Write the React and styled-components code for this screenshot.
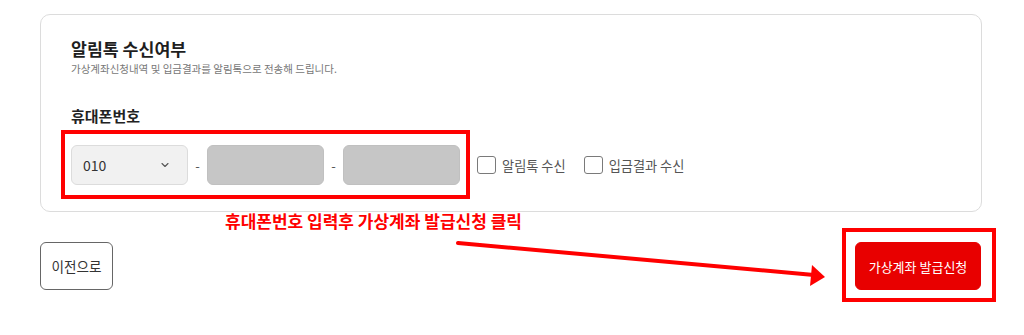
import React from "react";
import styled, { createGlobalStyle } from "styled-components";

const GlobalStyle = createGlobalStyle`
  html, body { margin: 0; padding: 0; background: #fff; }
  body { font-family: "Noto Sans CJK KR", "Noto Sans", sans-serif; color: #222; }
  * { box-sizing: border-box; }
`;

const Page = styled.div`
  min-height: 335px;
  padding: 14px 42px 32px 40px;
`;

const Card = styled.section`
  border: 1px solid #dcdcdc;
  border-radius: 10px;
  padding: 23px 30px 26px;
`;

const Title = styled.h2`
  margin: 0;
  font-size: 17.3px;
  line-height: 22px;
  font-weight: 700;
  color: #1e1e1e;
`;

const Sub = styled.p`
  margin: 2px 0 0;
  font-size: 10.5px;
  line-height: 14px;
  color: #777;
`;

const Label = styled.div`
  margin-top: 30px;
  font-size: 15px;
  line-height: 20px;
  font-weight: 700;
  color: #222;
`;

const Row = styled.div`
  margin-top: 19px;
  display: flex;
  align-items: center;
`;

const PhoneGroup = styled.div`
  position: relative;
  display: flex;
  align-items: center;
`;

const Highlight = styled.div`
  position: absolute;
  top: -15px;
  height: 69px;
  left: -10px;
  right: -10px;
  border: 4px solid #ff0000;
  pointer-events: none;
`;

const Select = styled.div`
  width: 117px;
  height: 40px;
  border: 1px solid #dcdcdc;
  border-radius: 6px;
  background: #f1f1f1;
  display: flex;
  align-items: center;
  justify-content: space-between;
  padding: 0 16px 0 11px;
  font-size: 14px;
  color: #333;
`;

const Dash = styled.span`
  width: 19px;
  text-align: center;
  font-size: 13px;
  color: #555;
`;

const Field = styled.div`
  width: 117px;
  height: 40px;
  border-radius: 6px;
  background: #c6c6c6;
  border: 1px solid #c0c0c0;
`;

const Checks = styled.div`
  display: flex;
  align-items: center;
  gap: 18px;
  margin-left: 17px;
`;

const CheckLabel = styled.label`
  display: flex;
  align-items: center;
  gap: 6px;
  font-size: 13.2px;
  color: #555;
`;

const Box = styled.span`
  width: 19px;
  height: 18px;
  border: 1px solid #7a7a7a;
  border-radius: 3px;
  background: #fff;
`;

const BottomBar = styled.div`
  position: relative;
  margin-top: 30px;
  height: 48px;
  display: flex;
  justify-content: space-between;
  align-items: flex-start;
`;

const Button = styled.button`
  display: block;
  height: 48px;
  padding: 0;
  width: ${(p) => (p.$primary ? 126 : 73)}px;
  border-radius: 6px;
  font-family: inherit;
  font-size: ${(p) => (p.$primary ? 13 : 13.6)}px;
  border: 1px solid ${(p) => (p.$primary ? "#e80000" : "#666")};
  background: ${(p) => (p.$primary ? "#e80000" : "#fff")};
  color: ${(p) => (p.$primary ? "#fff" : "#333")};
`;

const PrimaryWrap = styled.div`
  position: relative;
  height: 48px;
  margin-right: 1px;
`;

const ButtonHighlight = styled.div`
  position: absolute;
  top: -14px;
  left: -13px;
  width: 154px;
  height: 74px;
  border: 4px solid #ff0000;
  pointer-events: none;
`;

const Note = styled.div`
  position: absolute;
  left: 185px;
  top: -31px;
  font-size: 17px;
  line-height: 20px;
  font-weight: 700;
  color: #ff0000;
  white-space: nowrap;
`;

const Arrow = styled.svg`
  position: absolute;
  left: 0;
  top: 0;
  overflow: visible;
  pointer-events: none;
`;

const Chevron = () => (
  <svg width="12" height="12" viewBox="0 0 24 24" fill="none" stroke="#555" strokeWidth="2.2" strokeLinecap="round" strokeLinejoin="round">
    <path d="M6 9l6 6 6-6" />
  </svg>
);

export default function App() {
  return (
    <>
      <GlobalStyle />
      <Page>
        <Card>
          <Title>알림톡 수신여부</Title>
          <Sub>가상계좌신청내역 및 입금결과를 알림톡으로 전송해 드립니다.</Sub>
          <Label>휴대폰번호</Label>
          <Row>
            <PhoneGroup>
              <Select>
                <span>010</span>
                <Chevron />
              </Select>
              <Dash>-</Dash>
              <Field />
              <Dash>-</Dash>
              <Field />
              <Highlight />
            </PhoneGroup>
            <Checks>
              <CheckLabel>
                <Box />
                알림톡 수신
              </CheckLabel>
              <CheckLabel>
                <Box />
                입금결과 수신
              </CheckLabel>
            </Checks>
          </Row>
        </Card>
        <BottomBar>
          <Button>이전으로</Button>
          <PrimaryWrap>
            <Button $primary>가상계좌 발급신청</Button>
            <ButtonHighlight />
          </PrimaryWrap>
          <Note>휴대폰번호 입력후 가상계좌 발급신청 클릭</Note>
          <Arrow width="1" height="1">
            <line x1="418" y1="1" x2="774" y2="33" stroke="#ff0000" strokeWidth="4" strokeLinecap="round" />
            <polygon points="785,35 772,23 770,44" fill="#ff0000" />
          </Arrow>
        </BottomBar>
      </Page>
    </>
  );
}
